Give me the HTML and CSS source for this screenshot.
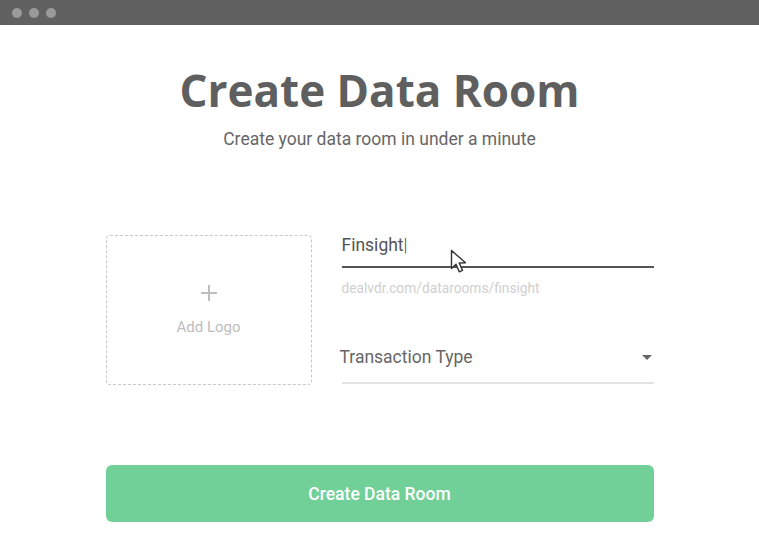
FILE: index.html
```html
<!DOCTYPE html>
<html>
<head>
<meta charset="utf-8">
<link rel="stylesheet" href="styles.css">
</head>
<body>
<div class="window">
  <div class="titlebar">
    <span class="dot"></span><span class="dot"></span><span class="dot"></span>
  </div>
  <main class="content">
    <h1 class="title">Create Data Room</h1>
    <p class="subtitle">Create your data room in under a minute</p>
    <div class="form-row">
      <div class="logo-box">
        <svg class="plus" width="18" height="18" viewBox="0 0 18 18"><path d="M9 1v16M1 9h16" stroke="#bdbdbd" stroke-width="2"/></svg>
        <span class="logo-label">Add Logo</span>
      </div>
      <div class="fields">
        <div class="field name-field">
          <div class="input-text">Finsight<span class="caret">|</span></div>
          <div class="underline active"></div>
          <div class="helper">dealvdr.com/datarooms/finsight</div>
          <svg class="cursor" width="18" height="26" viewBox="0 0 18 26"><path d="M1.5 1.5v18l4.5-4.3 3.3 7.6 3.2-1.4-3.3-7.4 6.3-.3z" fill="#fff" stroke="#333" stroke-width="1.4" stroke-linejoin="round"/></svg>
        </div>
        <div class="field select-field">
          <div class="select-row">
            <span class="select-label">Transaction Type</span>
            <svg class="arrow" width="10" height="5" viewBox="0 0 10 5"><path d="M0 0h10L5 5z" fill="#666"/></svg>
          </div>
          <div class="underline"></div>
        </div>
      </div>
    </div>
    <button class="submit">Create Data Room</button>
  </main>
</div>
</body>
</html>
```
FILE: styles.css
```css
* { box-sizing: border-box; }
html, body { margin: 0; padding: 0; background: #fff; }
body { font-family: Roboto, "Liberation Sans", sans-serif; width: 759px; height: 554px; overflow: hidden; }
.titlebar {
  height: 25px;
  background: #616161;
  display: flex;
  align-items: center;
  gap: 7px;
  padding-left: 12px;
}
.dot { width: 10px; height: 10px; border-radius: 50%; background: #9a9a9a; }
.content {
  width: 548px;
  margin: 0 auto;
  display: flex;
  flex-direction: column;
}
.title {
  font-family: "Open Sans", sans-serif;
  font-weight: 700;
  font-size: 44px;
  color: #5f5f5f;
  text-align: center;
  margin: 33px 0 0;
  line-height: 64px;
}
.subtitle {
  text-align: center;
  font-size: 17.5px;
  color: #666;
  margin: 5px 0 0;
  line-height: 24px;
}
.form-row {
  display: flex;
  gap: 30px;
  margin-top: 84px;
}
.logo-box {
  width: 206px;
  height: 150px;
  border: 1px dashed #c8c8c8;
  border-radius: 4px;
  display: flex;
  flex-direction: column;
  align-items: center;
  justify-content: center;
  padding-top: 0;
}
.plus { display: block; }
.logo-label { font-size: 15px; color: #bdbdbd; margin-top: 16px; }
.fields { flex: 1; display: flex; flex-direction: column; }
.field { position: relative; }
.input-text { font-size: 17.5px; color: #555; line-height: 20px; padding-left: 0; margin-top: 0; }
.caret { color: #444; font-weight: 300; }
.underline { height: 2px; background: #e3e3e3; }
.underline.active { background: #555; margin-top: 11px; }
.helper { font-size: 13.75px; color: #cfcfcf; margin-top: 12px; line-height: 16px; }
.cursor { position: absolute; left: 108px; top: 14px; }
.select-field { margin-top: 49px; margin-left: -2px; }
.select-row { display: flex; align-items: center; justify-content: space-between; padding-right: 0; height: 24px; }
.select-label { font-size: 17.5px; color: #666; }
.arrow { display: block; margin-right: 2px; }
.select-field .underline { margin-top: 13px; margin-left: 2px; }
.submit {
  margin-top: 80px;
  height: 57px;
  width: 100%;
  border: none;
  border-radius: 6px;
  background: #71cf98;
  color: #fff;
  font-family: Roboto, sans-serif;
  font-weight: 500;
  font-size: 17.5px;
}
```
